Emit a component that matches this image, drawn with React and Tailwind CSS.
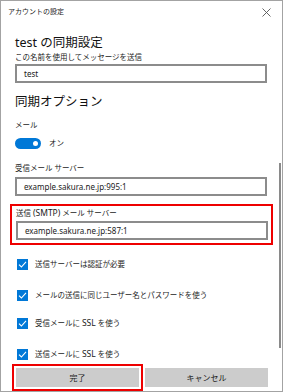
const font = { fontFamily: '"Noto Sans", "Noto Sans CJK JP", sans-serif' }

const Check = ({ children, className }) => (
	<div className={"flex items-center gap-[7px] " + className}>
		<span className="w-[11px] h-[11px] bg-[#0078d7] flex items-center justify-center shrink-0">
			<svg width="9" height="9" viewBox="0 0 9 9">
				<path d="M1 4.6 L3.4 7 L8 1.8" fill="none" stroke="#fff" strokeWidth="1.1" />
			</svg>
		</span>
		<span className="text-[7.5px] leading-[11px] text-[#1a1a1a]">{children}</span>
	</div>
)

const Field = ({ value }) => (
	<div className="w-[252px] h-[19px] border-2 border-[#8c8c8c] flex items-center pl-[7px] text-[8px] text-[#1a1a1a]">
		{value}
	</div>
)

export default function App() {
	return (
		<div
			className="relative w-[283px] h-[392px] bg-white border border-[#a3a3a3] overflow-hidden"
			style={font}
		>
			<div className="h-[22px] flex items-center justify-between pl-[7px] pr-[11px] text-[7px] text-[#222]">
				<span>アカウントの設定</span>
				<svg width="9" height="9" viewBox="0 0 9 9">
					<path d="M0.5 0.5 L8.5 8.5 M8.5 0.5 L0.5 8.5" stroke="#555" strokeWidth="0.9" />
				</svg>
			</div>

			<div className="px-[14px] flex flex-col">
				<div className="mt-[12px] text-[12.5px] leading-[16px] text-[#111]">test の同期設定</div>
				<div className="mt-[1px] text-[7.5px] leading-[11px] text-[#1a1a1a]">この名前を使用してメッセージを送信</div>
				<div className="mt-[1px]">
					<Field value="test" />
				</div>

				<div className="mt-[11px] text-[12.5px] leading-[16px] text-[#111]">同期オプション</div>
				<div className="mt-[10px] text-[7.5px] leading-[11px] text-[#1a1a1a]">メール</div>
				<div className="mt-[7px] flex items-center gap-[8px]">
					<span className="w-[26px] h-[11px] rounded-full bg-[#0078d7] flex items-center justify-end pr-[3px]">
						<span className="w-[5px] h-[5px] rounded-full bg-white" />
					</span>
					<span className="text-[7.5px] leading-[11px] text-[#1a1a1a]">オン</span>
				</div>

				<div className="mt-[14px] text-[7.5px] leading-[11px] text-[#1a1a1a]">受信メール サーバー</div>
				<div className="mt-[3px]">
					<Field value="example.sakura.ne.jp:995:1" />
				</div>

				<div className="mt-[8px] -ml-[5px] w-[263px] border-2 border-[#ee0000] pl-[4px] pt-[1px] pb-[3px]">
					<div className="text-[7.5px] leading-[11px] text-[#1a1a1a]">
						送信 <span className="text-[8.5px]">(SMTP)</span> メール サーバー
					</div>
					<div className="mt-[2px]">
						<Field value="example.sakura.ne.jp:587:1" />
					</div>
				</div>

				<Check className="mt-[14px] ml-[2px]">送信サーバーは認証が必要</Check>
				<Check className="mt-[20px] ml-[2px]">メールの送信に同じユーザー名とパスワードを使う</Check>
				<Check className="mt-[16px] ml-[2px]">
					受信メールに <span className="text-[8.5px]">SSL</span> を使う
				</Check>
				<Check className="mt-[19px] ml-[2px]">
					送信メールに <span className="text-[8.5px]">SSL</span> を使う
				</Check>

				<div className="mt-[4px] -ml-[3px] flex items-center">
					<div className="border-2 border-[#ee0000] p-[2px]">
						<div className="w-[123px] h-[19px] bg-[#cccccc] flex items-center justify-center text-[8px] text-[#1a1a1a]">
							完了
						</div>
					</div>
					<div className="ml-[2px] w-[123px] h-[19px] bg-[#cccccc] flex items-center justify-center text-[8px] text-[#1a1a1a]">
						キャンセル
					</div>
				</div>
			</div>

			<div className="absolute left-[278px] top-[162px] w-[2px] h-[185px] bg-[#8a8a8a]" />
		</div>
	)
}
